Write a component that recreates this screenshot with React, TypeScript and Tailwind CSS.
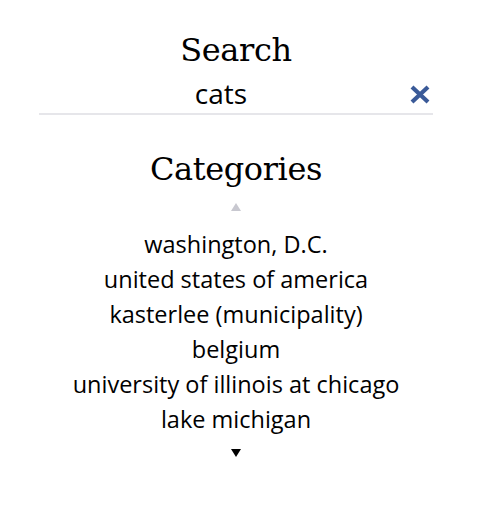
const categories = [
  "washington, D.C.",
  "united states of america",
  "kasterlee (municipality)",
  "belgium",
  "university of illinois at chicago",
  "lake michigan",
];

export default function App() {
  return (
    <div className="w-[472px] h-[507px] bg-white flex flex-col items-center text-black">
      {/* Search */}
      <h1 className="mt-[28px] h-[44px] text-[32px] leading-[44px] font-['Georgia','DejaVu_Serif',serif] tracking-[-0.4px]">
        Search
      </h1>
      <div className="relative w-[394px] h-[43px] border-b-2 border-[#e6e6ea] flex items-start justify-center pt-[5px] pr-[30px]">
        <span className="text-[28px] leading-[32px] font-['Open_Sans','Noto_Sans',sans-serif]">
          cats
        </span>
        <button className="absolute right-[3px] top-[13px]">
          <svg width="20" height="19" viewBox="0 0 20 19">
            <path d="M2 2 L18 17 M18 2 L2 17" stroke="#3a5a98" strokeWidth="4.2" />
          </svg>
        </button>
      </div>

      {/* Categories */}
      <h2 className="mt-[32px] h-[44px] text-[32px] leading-[44px] font-['Georgia','DejaVu_Serif',serif] tracking-[-0.4px]">
        Categories
      </h2>
      <div className="mt-[12px] w-0 h-0 border-x-[5px] border-x-transparent border-b-[8px] border-b-[#c8c8d0]" />
      <ul className="mt-[16px] flex flex-col items-center font-['Open_Sans','Noto_Sans',sans-serif] text-[23.5px] leading-[35px]">
        {categories.map((c) => (
          <li key={c}>{c}</li>
        ))}
      </ul>
      <div className="mt-[12px] w-0 h-0 border-x-[5px] border-x-transparent border-t-[8px] border-t-black" />
    </div>
  );
}
